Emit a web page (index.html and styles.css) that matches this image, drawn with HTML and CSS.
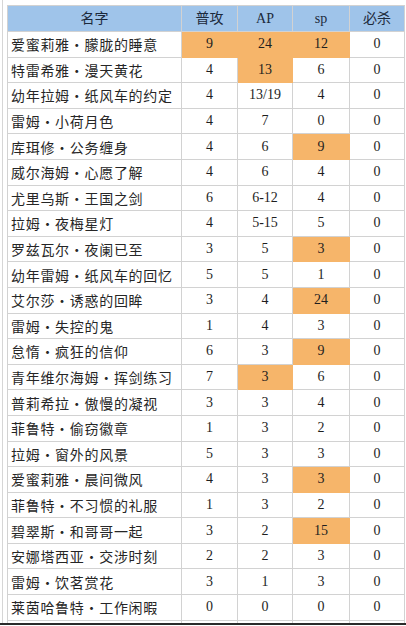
FILE: index.html
```html
<!DOCTYPE html>
<html lang="zh">
<head>
<meta charset="utf-8">
<link rel="stylesheet" href="styles.css">
</head>
<body>
<div class="frame">
<table class="stats">
<colgroup><col class="c-name"><col class="c-n1"><col class="c-n2"><col class="c-n3"><col class="c-n4"></colgroup>
<thead><tr><th>名字</th><th>普攻</th><th>AP</th><th>sp</th><th>必杀</th></tr></thead>
<tbody>
<tr><td class="name">爱蜜莉雅・朦胧的睡意</td><td class="hi">9</td><td class="hi">24</td><td class="hi">12</td><td>0</td></tr>
<tr><td class="name">特雷希雅・漫天黄花</td><td>4</td><td class="hi">13</td><td>6</td><td>0</td></tr>
<tr><td class="name">幼年拉姆・纸风车的约定</td><td>4</td><td>13/19</td><td>4</td><td>0</td></tr>
<tr><td class="name">雷姆・小荷月色</td><td>4</td><td>7</td><td>0</td><td>0</td></tr>
<tr><td class="name">库珥修・公务缠身</td><td>4</td><td>6</td><td class="hi">9</td><td>0</td></tr>
<tr><td class="name">威尔海姆・心愿了解</td><td>4</td><td>6</td><td>4</td><td>0</td></tr>
<tr><td class="name">尤里乌斯・王国之剑</td><td>6</td><td>6-12</td><td>4</td><td>0</td></tr>
<tr><td class="name">拉姆・夜梅星灯</td><td>4</td><td>5-15</td><td>5</td><td>0</td></tr>
<tr><td class="name">罗兹瓦尔・夜阑已至</td><td>3</td><td>5</td><td class="hi">3</td><td>0</td></tr>
<tr><td class="name">幼年雷姆・纸风车的回忆</td><td>5</td><td>5</td><td>1</td><td>0</td></tr>
<tr><td class="name">艾尔莎・诱惑的回眸</td><td>3</td><td>4</td><td class="hi">24</td><td>0</td></tr>
<tr><td class="name">雷姆・失控的鬼</td><td>1</td><td>4</td><td>3</td><td>0</td></tr>
<tr><td class="name">怠惰・疯狂的信仰</td><td>6</td><td>3</td><td class="hi">9</td><td>0</td></tr>
<tr><td class="name">青年维尔海姆・挥剑练习</td><td>7</td><td class="hi">3</td><td>6</td><td>0</td></tr>
<tr><td class="name">普莉希拉・傲慢的凝视</td><td>3</td><td>3</td><td>4</td><td>0</td></tr>
<tr><td class="name">菲鲁特・偷窃徽章</td><td>1</td><td>3</td><td>2</td><td>0</td></tr>
<tr><td class="name">拉姆・窗外的风景</td><td>5</td><td>3</td><td>3</td><td>0</td></tr>
<tr><td class="name">爱蜜莉雅・晨间微风</td><td>4</td><td>3</td><td class="hi">3</td><td>0</td></tr>
<tr><td class="name">菲鲁特・不习惯的礼服</td><td>1</td><td>3</td><td>2</td><td>0</td></tr>
<tr><td class="name">碧翠斯・和哥哥一起</td><td>3</td><td>2</td><td class="hi">15</td><td>0</td></tr>
<tr><td class="name">安娜塔西亚・交涉时刻</td><td>2</td><td>2</td><td>3</td><td>0</td></tr>
<tr><td class="name">雷姆・饮茗赏花</td><td>3</td><td>1</td><td>3</td><td>0</td></tr>
<tr><td class="name">莱茵哈鲁特・工作闲暇</td><td>0</td><td>0</td><td>0</td><td>0</td></tr>
<tr class="sliver"><td></td><td></td><td></td><td></td><td></td></tr>
</tbody>
</table>
</div>
<div class="cut"></div>
</body>
</html>
```
FILE: styles.css
```css
html, body {
  margin: 0;
  padding: 0;
  background: #ffffff;
}
body {
  width: 406px;
  height: 626px;
  overflow: hidden;
  font-family: "Liberation Serif", "Noto Sans CJK SC", serif;
  color: #1e1e1e;
}
.frame {
  margin-left: 2px;
  padding: 5px 0 0 4px;
  border-left: 1px solid #d6d6d6;
  height: 623px;
  overflow: hidden;
  box-sizing: border-box;
}
.stats {
  border-collapse: collapse;
  table-layout: fixed;
  width: 397px;
  font-size: 14px;
}
.c-name { width: 174px; }
.c-n1 { width: 56px; }
.c-n2 { width: 55px; }
.c-n3 { width: 57px; }
.c-n4 { width: 55px; }
.stats th, .stats td {
  border: 1px solid #d2d2d2;
  text-align: center;
  padding: 0;
  height: 24.6px;
  line-height: 16px;
}
.stats th {
  background: #9fc4ea;
  font-weight: normal;
  font-family: "Liberation Serif", "Noto Sans CJK SC", serif;
  color: #1c2a3c;
  height: 25px;
}
.stats td.name {
  text-align: left;
  padding-left: 3px;
  font-family: "Noto Sans CJK SC", sans-serif;
  color: #262626;
  letter-spacing: 0.7px;
  white-space: nowrap;
}
.stats td.hi {
  background: #f6b56a;
  border-color: #f6b56a;
}
.stats tr.sliver td {
  height: 8px;
}
.cut {
  height: 3px;
  border-top: 2px solid #2a2a2a;
}
```
